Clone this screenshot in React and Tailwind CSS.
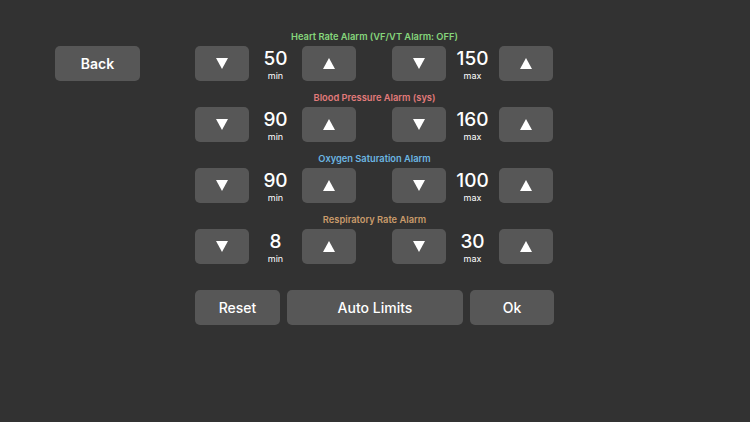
import { useState } from 'react';

const font = { fontFamily: 'Inter, "Noto Sans", sans-serif' };

function Tri({ up }) {
  return (
    <svg width="12" height="11" viewBox="0 0 12 11">
      {up ? <polygon points="6,0 12,11 0,11" fill="#fff" /> : <polygon points="0,0 12,0 6,11" fill="#fff" />}
    </svg>
  );
}

function StepButton({ up, onClick }) {
  return (
    <button
      onClick={onClick}
      className="w-[54px] h-[35px] rounded-[5px] bg-[#575757] flex items-center justify-center"
    >
      <Tri up={up} />
    </button>
  );
}

function Stepper({ value, label, onChange }) {
  return (
    <div className="flex items-center">
      <StepButton onClick={() => onChange(value - 1)} />
      <div className="w-[53px] flex flex-col items-center text-white">
        <span className="text-[19px] leading-[23px] font-medium">{value}</span>
        <span className="text-[9px] leading-[11px]">{label}</span>
      </div>
      <StepButton up onClick={() => onChange(value + 1)} />
    </div>
  );
}

const initial = [
  { title: 'Heart Rate Alarm (VF/VT Alarm: OFF)', color: 'text-[#86d67c]', min: 50, max: 150 },
  { title: 'Blood Pressure Alarm (sys)', color: 'text-[#e27b7b]', min: 90, max: 160 },
  { title: 'Oxygen Saturation Alarm', color: 'text-[#6cb6e2]', min: 90, max: 100 },
  { title: 'Respiratory Rate Alarm', color: 'text-[#c99b6b]', min: 8, max: 30 },
];

export default function App() {
  const [alarms, setAlarms] = useState(initial);

  const update = (i, key, v) => {
    setAlarms(alarms.map((a, j) => (j === i ? { ...a, [key]: v } : a)));
  };

  return (
    <div className="w-[750px] h-[422px] bg-[#323232] flex pl-[55px] pt-[29px]" style={font}>
      <div className="pt-[17px]">
        <button className="w-[85px] h-[35px] rounded-[5px] bg-[#575757] text-white text-[14px] font-semibold">
          Back
        </button>
      </div>
      <div className="ml-[55px] w-[359px] flex flex-col">
        {alarms.map((a, i) => (
          <div key={a.title} className="flex flex-col mb-[9px]">
            <div className={`h-[14px] mb-[3px] pt-[1px] text-center text-[9.3px] leading-[14px] font-semibold ${a.color}`}>
              {a.title}
            </div>
            <div className="flex gap-[36px]">
              <Stepper value={a.min} label="min" onChange={(v) => update(i, 'min', v)} />
              <Stepper value={a.max} label="max" onChange={(v) => update(i, 'max', v)} />
            </div>
          </div>
        ))}
        <div className="flex gap-[7px] mt-[17px] text-white text-[14px] font-medium">
          <button onClick={() => setAlarms(initial)} className="w-[85px] h-[35px] rounded-[5px] bg-[#575757]">
            Reset
          </button>
          <button className="w-[176px] h-[35px] rounded-[5px] bg-[#575757]">Auto Limits</button>
          <button className="w-[84px] h-[35px] rounded-[5px] bg-[#575757]">Ok</button>
        </div>
      </div>
    </div>
  );
}
